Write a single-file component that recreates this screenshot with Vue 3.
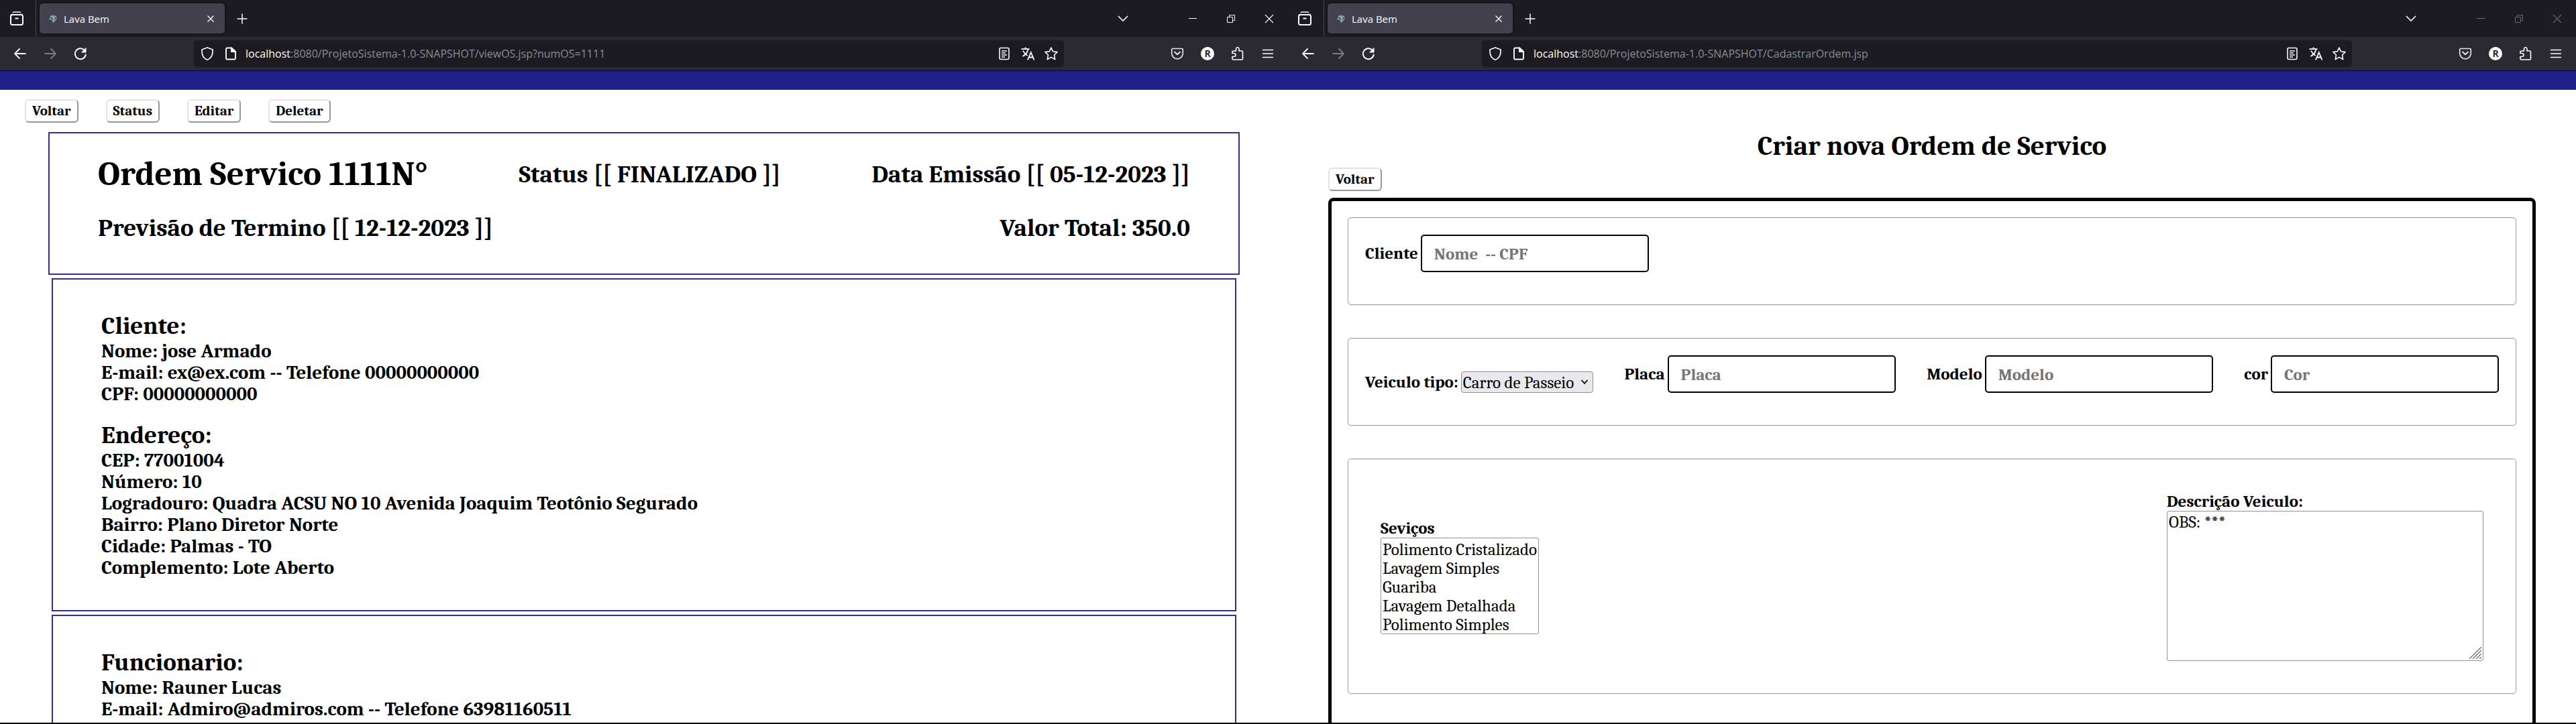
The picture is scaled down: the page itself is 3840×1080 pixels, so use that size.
<script setup>
import { ref } from 'vue'

const windows = [
  { id: 'view', path: ':8080/ProjetoSistema-1.0-SNAPSHOT/viewOS.jsp?numOS=1111', active: true },
  { id: 'create', path: ':8080/ProjetoSistema-1.0-SNAPSHOT/CadastrarOrdem.jsp', active: false }
]

const actions = ['Voltar', 'Status', 'Editar', 'Deletar']

const cards = [
  [
    {
      title: 'Cliente:',
      lines: ['Nome: jose Armado', 'E-mail: ex@ex.com -- Telefone 00000000000', 'CPF: 00000000000']
    },
    {
      title: 'Endereço:',
      lines: [
        'CEP: 77001004',
        'Número: 10',
        'Logradouro: Quadra ACSU NO 10 Avenida Joaquim Teotônio Segurado',
        'Bairro: Plano Diretor Norte',
        'Cidade: Palmas - TO',
        'Complemento: Lote Aberto'
      ]
    }
  ],
  [
    {
      title: 'Funcionario:',
      lines: ['Nome: Rauner Lucas', 'E-mail: Admiro@admiros.com -- Telefone 63981160511']
    }
  ]
]

const vehicleFields = [
  { id: 'placa', label: 'Placa', placeholder: 'Placa' },
  { id: 'modelo', label: 'Modelo', placeholder: 'Modelo' },
  { id: 'cor', label: 'cor', placeholder: 'Cor' }
]

const services = ['Polimento Cristalizado', 'Lavagem Simples', 'Guariba', 'Lavagem Detalhada', 'Polimento Simples']

const notes = ref('OBS: ***')
</script>

<template>
  <div class="screen">
    <section v-for="win in windows" :key="win.id" class="window">
      <header class="tabs">
        <button class="history" type="button" aria-label="Abas recentes">
          <svg width="20" height="22" viewBox="0 0 20 22" fill="none" stroke="#fbfbfe" stroke-width="2">
            <path d="M4 2.5 Q4.500 1 6 1 H14 Q15.500 1 16 2.500" stroke="#bdbcc4" />
            <path d="M1 5 H19" />
            <rect x="1" y="5" width="18" height="15" rx="2.500" />
            <path d="M7.500 10.500 H12.500" />
          </svg>
        </button>
        <div class="tab">
          <svg class="favicon" width="16" height="16" viewBox="0 0 16 16">
            <path d="M3 4 L8 2 L13 4 L14 8 L11 12 L8 14 L6 10 L2 9Z" fill="#6f8796" />
            <path d="M5 4 L8 6 L12 5 M4 8 L8 7 L11 9 M8 10 L9 13" stroke="#b9d2df" fill="none" />
            <path d="M6 6 L7 9 M11 6 L12 8 M2 6 H4" stroke="#26333f" fill="none" stroke-width="1.500" />
          </svg>
          <span class="tab-title">Lava Bem</span>
          <button type="button" class="tab-close" aria-label="Fechar aba">
            <svg width="12" height="12" viewBox="0 0 12 12" stroke="#fbfbfe" stroke-width="1.400"><path d="M1.500 1.500 L10.500 10.500 M10.500 1.500 L1.500 10.500" /></svg>
          </button>
        </div>
        <button type="button" class="tool new-tab" aria-label="Nova aba">
          <svg width="16" height="16" viewBox="0 0 16 16" stroke="#fbfbfe" stroke-width="1.500"><path d="M8 0.500 V15.500 M0.500 8 H15.500" /></svg>
        </button>
        <div class="controls" :class="{ idle: !win.active }">
          <button type="button" class="tool tab-list" aria-label="Listar abas">
            <svg width="16" height="10" viewBox="0 0 16 10" fill="none" stroke="#fbfbfe" stroke-width="1.600"><path d="M1 1 L8 8 L15 1" /></svg>
          </button>
          <button type="button" class="control" aria-label="Minimizar">
            <svg width="12" height="12" viewBox="0 0 12 12" stroke="currentColor"><path d="M0 5.500 H12" /></svg>
          </button>
          <button type="button" class="control" aria-label="Restaurar">
            <svg width="12" height="12" viewBox="0 0 12 12" fill="none" stroke="currentColor"><path d="M0.500 3.500 H8.500 V11.500 H0.500Z M3.500 3.500 V0.500 H11.500 V8.500 H8.500" /></svg>
          </button>
          <button type="button" class="control" aria-label="Fechar">
            <svg width="14" height="14" viewBox="0 0 14 14" stroke="currentColor" stroke-width="1.100"><path d="M1 1 L13 13 M13 1 L1 13" /></svg>
          </button>
        </div>
      </header>

      <nav class="toolbar">
        <div class="tools">
          <button type="button" class="tool" aria-label="Recuar">
            <svg width="20" height="20" viewBox="0 0 20 20" fill="none" stroke="#fbfbfe" stroke-width="1.800" stroke-linecap="round" stroke-linejoin="round"><path d="M18 10 H2 M9 3 L2 10 L9 17" /></svg>
          </button>
          <button type="button" class="tool" aria-label="Avançar">
            <svg width="20" height="20" viewBox="0 0 20 20" fill="none" stroke="#7c7b82" stroke-width="1.800" stroke-linecap="round" stroke-linejoin="round"><path d="M2 10 H18 M11 3 L18 10 L11 17" /></svg>
          </button>
          <button type="button" class="tool" aria-label="Recarregar">
            <svg width="20" height="20" viewBox="0 0 20 20" fill="none" stroke="#fbfbfe" stroke-width="1.900" stroke-linecap="round">
              <path d="M15.500 4.500 A8 8 0 1 0 17.800 11.500" />
              <path d="M18 2 V8 H12Z" fill="#fbfbfe" stroke-width="1" stroke-linejoin="round" />
            </svg>
          </button>
        </div>

        <div class="address">
          <svg width="20" height="20" viewBox="0 0 20 20" fill="none" stroke="#fbfbfe" stroke-width="1.700" stroke-linejoin="round">
            <path d="M10 1 L18 4 C18.500 11 16 17 10 19.200 C4 17 1.500 11 2 4Z" />
          </svg>
          <svg class="page-icon" width="20" height="20" viewBox="0 0 20 20" fill="none" stroke="#fbfbfe" stroke-width="1.900" stroke-linejoin="round">
            <path d="M5 1.500 H11 L17 7 V16.500 Q17 18.500 15 18.500 H5 Q3 18.500 3 16.500 V3.500 Q3 1.500 5 1.500Z" />
            <path d="M11 1.500 V7 H17Z" fill="#fbfbfe" />
          </svg>
          <span class="url"><b>localhost</b>{{ win.path }}</span>
          <button type="button" class="inline-tool" aria-label="Modo de leitura">
            <svg width="20" height="20" viewBox="0 0 20 20" fill="none" stroke="#fbfbfe" stroke-width="1.600">
              <rect x="3" y="1.500" width="14" height="17" rx="2" />
              <path d="M6 6 H14 M6 9 H12 M6 12 H14 M6 15 H11" stroke-width="1.300" />
            </svg>
          </button>
          <button type="button" class="inline-tool" aria-label="Traduzir">
            <svg width="20" height="20" viewBox="0 0 20 20" fill="none" stroke="#fbfbfe" stroke-width="1.800">
              <path d="M0.500 3.200 H12.500 M6.500 0.500 V3 M2.500 14 C7 11.500 9.800 8 10.500 3.500 M3 5.500 C4.500 9 7 11.500 9.500 13" />
              <path d="M10 19.500 L14.700 8 L19.500 19.500 M11.500 15.500 H18" />
            </svg>
          </button>
          <button type="button" class="inline-tool" aria-label="Favoritar">
            <svg width="20" height="20" viewBox="0 0 20 20" fill="none" stroke="#fbfbfe" stroke-width="1.600" stroke-linejoin="round">
              <path d="M10 1.200 L12.600 6.800 L19 7.600 L14.500 12 L15.700 18.600 L10 15.400 L4.300 18.600 L5.500 12 L1 7.600 L7.400 6.800Z" />
            </svg>
          </button>
        </div>

        <div class="tools">
          <button type="button" class="tool" aria-label="Pocket">
            <svg width="20" height="20" viewBox="0 0 20 20" fill="none" stroke="#e4e3e9" stroke-width="1.700" stroke-linecap="round" stroke-linejoin="round">
              <path d="M3.500 2.500 H16.500 Q18.300 2.500 18.300 4.500 V9.500 A8.300 8.300 0 0 1 1.700 9.500 V4.500 Q1.700 2.500 3.500 2.500Z" />
              <path d="M6 7.500 L10 11.300 L14 7.500" stroke-width="2" />
            </svg>
          </button>
          <button type="button" class="tool" aria-label="Conta"><span class="account">R</span></button>
          <button type="button" class="tool" aria-label="Extensões">
            <svg width="20" height="20" viewBox="0 0 20 20" fill="none" stroke="#fbfbfe" stroke-width="1.600" stroke-linejoin="round">
              <path d="M2 9 V7 Q2 6 3 6 H7.500 V3 A2 2 0 0 1 12 3 V6 H16 Q17.500 6 17.500 7.500 V17.500 Q17.500 19 16 19 H3.500 Q2 19 2 17.500 V14.500 H4.500 A2.500 2.500 0 0 0 4.500 9.500 H2Z" />
            </svg>
          </button>
          <button type="button" class="tool" aria-label="Menu">
            <svg width="16" height="14" viewBox="0 0 16 14" stroke="#fbfbfe" stroke-width="1.400"><path d="M0 1.500 H16 M0 7 H16 M0 12.500 H16" /></svg>
          </button>
        </div>
      </nav>

      <div class="banner"></div>

      <main v-if="win.id === 'view'" class="page">
        <div class="actions">
          <button v-for="action in actions" :key="action" type="button" class="action">{{ action }}</button>
        </div>
        <article class="summary">
          <div class="summary-row">
            <h1>Ordem Servico 1111N°</h1>
            <h2>Status [[ FINALIZADO ]]</h2>
            <h2>Data Emissão [[ 05-12-2023 ]]</h2>
          </div>
          <div class="summary-row">
            <h2>Previsão de Termino [[ 12-12-2023 ]]</h2>
            <h2>Valor Total: 350.0</h2>
          </div>
        </article>
        <article v-for="(groups, index) in cards" :key="index" class="card">
          <section v-for="group in groups" :key="group.title">
            <h2>{{ group.title }}</h2>
            <p v-for="line in group.lines" :key="line">{{ line }}</p>
          </section>
        </article>
      </main>

      <main v-else class="page create">
        <h1>Criar nova Ordem de Servico</h1>
        <button type="button" class="action">Voltar</button>
        <form class="order" @submit.prevent>
          <div class="group">
            <div class="field">
              <label for="cliente">Cliente</label>
              <input id="cliente" type="text" placeholder="Nome&nbsp; -- CPF" />
            </div>
          </div>
          <div class="group">
            <div class="field type-field">
              <label for="tipo">Veiculo tipo:</label>
              <div class="dropdown">
                <select id="tipo">
                  <option>Carro de Passeio</option>
                </select>
                <svg class="arrow" width="12" height="8" viewBox="0 0 12 8" fill="none" stroke="#000" stroke-width="1.800"><path d="M1.500 1 L6 6 L10.500 1" /></svg>
              </div>
            </div>
            <div v-for="field in vehicleFields" :key="field.id" class="field">
              <label :for="field.id">{{ field.label }}</label>
              <input :id="field.id" type="text" :placeholder="field.placeholder" />
            </div>
          </div>
          <div class="group details">
            <div class="stack">
              <label for="servicos">Seviços</label>
              <select id="servicos" class="services" multiple size="5">
                <option v-for="service in services" :key="service">{{ service }}</option>
              </select>
            </div>
            <div class="stack">
              <label for="descricao">Descrição Veiculo:</label>
              <div class="notes">
                <textarea id="descricao" v-model="notes" spellcheck="false"></textarea>
                <svg class="grip" width="18" height="18" viewBox="0 0 18 18" stroke="#6d6d6d" stroke-width="1.300"><path d="M0 18 L18 0 M5 18 L18 5 M10 18 L18 10 M15 18 L18 15" /></svg>
              </div>
            </div>
          </div>
        </form>
      </main>
    </section>
  </div>
</template>

<style>
body {
  margin: 0;
  background: #fff;
}
</style>

<style scoped>
* {
  box-sizing: border-box;
}

.screen {
  display: flex;
  height: 100vh;
  overflow: hidden;
  border-bottom: 2px solid #000;
  background: #fff;
  color: #000;
  font-family: Cambria, "Liberation Serif", serif;
}

.window {
  flex: 1 1 0;
  min-width: 0;
  display: flex;
  flex-direction: column;
}

.window > * {
  flex-shrink: 0;
}

button {
  margin: 0;
  padding: 0;
  border: 0;
  background: none;
  color: inherit;
  font: inherit;
}

svg {
  display: block;
  flex-shrink: 0;
}

h1,
h2,
p {
  margin: 0;
  font-weight: bold;
}

/* Browser chrome */
.tabs {
  display: flex;
  align-items: center;
  height: 55px;
  background: #1c1b22;
  font-family: "Open Sans", "Noto Sans", sans-serif;
}

.history {
  display: flex;
  align-items: center;
  justify-content: center;
  width: 54px;
  height: 55px;
  padding-right: 3px;
  border-right: 1px solid #4a4951;
}

.tab {
  display: flex;
  align-items: center;
  width: 276px;
  height: 45px;
  margin-left: 5px;
  padding: 0 15px 0 12px;
  border-radius: 5px;
  background: #42414d;
  box-shadow: 0 0 4px #0c0c0f;
  color: #fbfbfe;
}

.tab-title {
  flex: 1;
  margin-left: 8px;
  font-size: 15px;
}

.tab-close,
.tool,
.control {
  display: flex;
  align-items: center;
  justify-content: center;
}

.tool {
  width: 36px;
  height: 36px;
}

.new-tab {
  margin-left: 8px;
}

.controls {
  display: flex;
  align-items: center;
  margin-left: auto;
  color: #fbfbfe;
}

.controls.idle {
  color: #6a696f;
}

.tab-list {
  margin-right: 57px;
}

.control {
  width: 57px;
  height: 55px;
}

.toolbar {
  display: flex;
  align-items: center;
  height: 51px;
  padding: 0 12px;
  border-bottom: 1px solid #0c0c0d;
  background: #2b2a33;
}

.tools {
  display: flex;
  gap: 9px;
}

.address {
  flex: 1;
  display: flex;
  align-items: center;
  gap: 15px;
  height: 40px;
  margin: 0 151px;
  padding: 0 9px 0 10px;
  border-radius: 5px;
  background: #1c1b22;
}

.url {
  flex: 1;
  color: #8c8b92;
  font-family: "Open Sans", "Noto Sans", sans-serif;
  font-size: 16px;
  white-space: nowrap;
}

.page-icon {
  margin-right: -3px;
}

.url b {
  color: #fbfbfe;
  font-weight: normal;
}

.account {
  width: 20px;
  height: 20px;
  border-radius: 50%;
  background: #fbfbfe;
  color: #2b2a33;
  font: bold 14px/20px "Open Sans", sans-serif;
  text-align: center;
}

.banner {
  height: 28px;
  background: #20208b;
}

/* Order view */
.page {
  display: flex;
  flex-direction: column;
  padding: 14px 72px 0;
}

.actions {
  display: flex;
  gap: 41px;
  margin: 0 0 14px -35px;
}

.action {
  height: 35px;
  padding: 0 9px;
  border: 2px solid;
  border-color: #e3e3e3 #979797 #979797 #e3e3e3;
  border-radius: 6px;
  background: #fff;
  color: #000;
  font-size: 21px;
  font-weight: bold;
  line-height: 31px;
}

.summary,
.card {
  border: 2px solid #2e3092;
}

.summary {
  display: flex;
  flex-direction: column;
  gap: 31px;
  padding: 33px 72px 47px;
}

.summary-row {
  display: flex;
  align-items: center;
  justify-content: space-between;
}

.summary h1 {
  font-size: 51px;
  line-height: 56px;
}

.summary h2 {
  font-size: 37px;
  line-height: 42px;
}

.card {
  display: flex;
  flex-direction: column;
  gap: 23px;
  margin: 5px 5px 0;
  padding: 47px 72px;
}

.card h2 {
  font-size: 37px;
  line-height: 44px;
}

.card p {
  font-size: 29px;
  line-height: 32px;
}

/* Order form */
.create {
  align-items: flex-start;
  padding: 60px 60px 0;
}

.create h1 {
  align-self: center;
  margin-bottom: 8px;
  font-size: 41px;
  line-height: 48px;
}

.order {
  display: flex;
  flex-direction: column;
  gap: 49px;
  align-self: stretch;
  margin-top: 10px;
  padding: 24px 24px 60px;
  border: 5px solid #000;
  border-radius: 8px;
}

.group {
  display: flex;
  align-items: flex-end;
  justify-content: space-between;
  padding: 25px 25px 48px;
  border: 1px solid #9f9f9f;
  border-radius: 5px;
  box-shadow: 0 1px 0 #eee, inset 0 1px 0 #eee;
}

.field {
  display: flex;
  align-items: center;
  gap: 4px;
}

label {
  font-size: 25px;
  font-weight: bold;
  line-height: 28px;
}

input {
  width: 340px;
  height: 56px;
  padding: 0 18px;
  border: 2px solid #000;
  border-radius: 5px;
  background: #fff;
  font-family: inherit;
  font-size: 25px;
  font-weight: bold;
}

input::placeholder {
  color: #757575;
}

.dropdown {
  position: relative;
}

.dropdown select {
  display: block;
  width: 197px;
  height: 32px;
  padding: 0 2px;
  border: 1px solid #8f8f9d;
  border-radius: 4px;
  background: #e9e9ed;
  color: #000;
  font-family: inherit;
  font-size: 25px;
  appearance: none;
}

.arrow {
  position: absolute;
  top: 12px;
  right: 7px;
  pointer-events: none;
}

.details {
  align-items: center;
  padding: 49px 48px 48px;
}

.stack {
  display: flex;
  flex-direction: column;
}

.services {
  width: 236px;
  height: 144px;
  padding: 2px 0 0;
  overflow: hidden;
  border: 1px solid #8f8f9d;
  border-radius: 3px;
  background: #fff;
  font-family: inherit;
  font-size: 25px;
  appearance: none;
}

.services option {
  height: 28px;
  min-height: 28px;
  padding: 0 2px;
  color: #000;
  line-height: 28px;
}

.notes {
  position: relative;
}

textarea {
  display: block;
  width: 472px;
  height: 224px;
  padding: 2px;
  border: 1px solid #8f8f9d;
  border-radius: 3px;
  background: #fff;
  color: #000;
  font-family: inherit;
  font-size: 25px;
  line-height: 28px;
  resize: none;
}

.grip {
  position: absolute;
  right: 3px;
  bottom: 3px;
  pointer-events: none;
}
</style>
